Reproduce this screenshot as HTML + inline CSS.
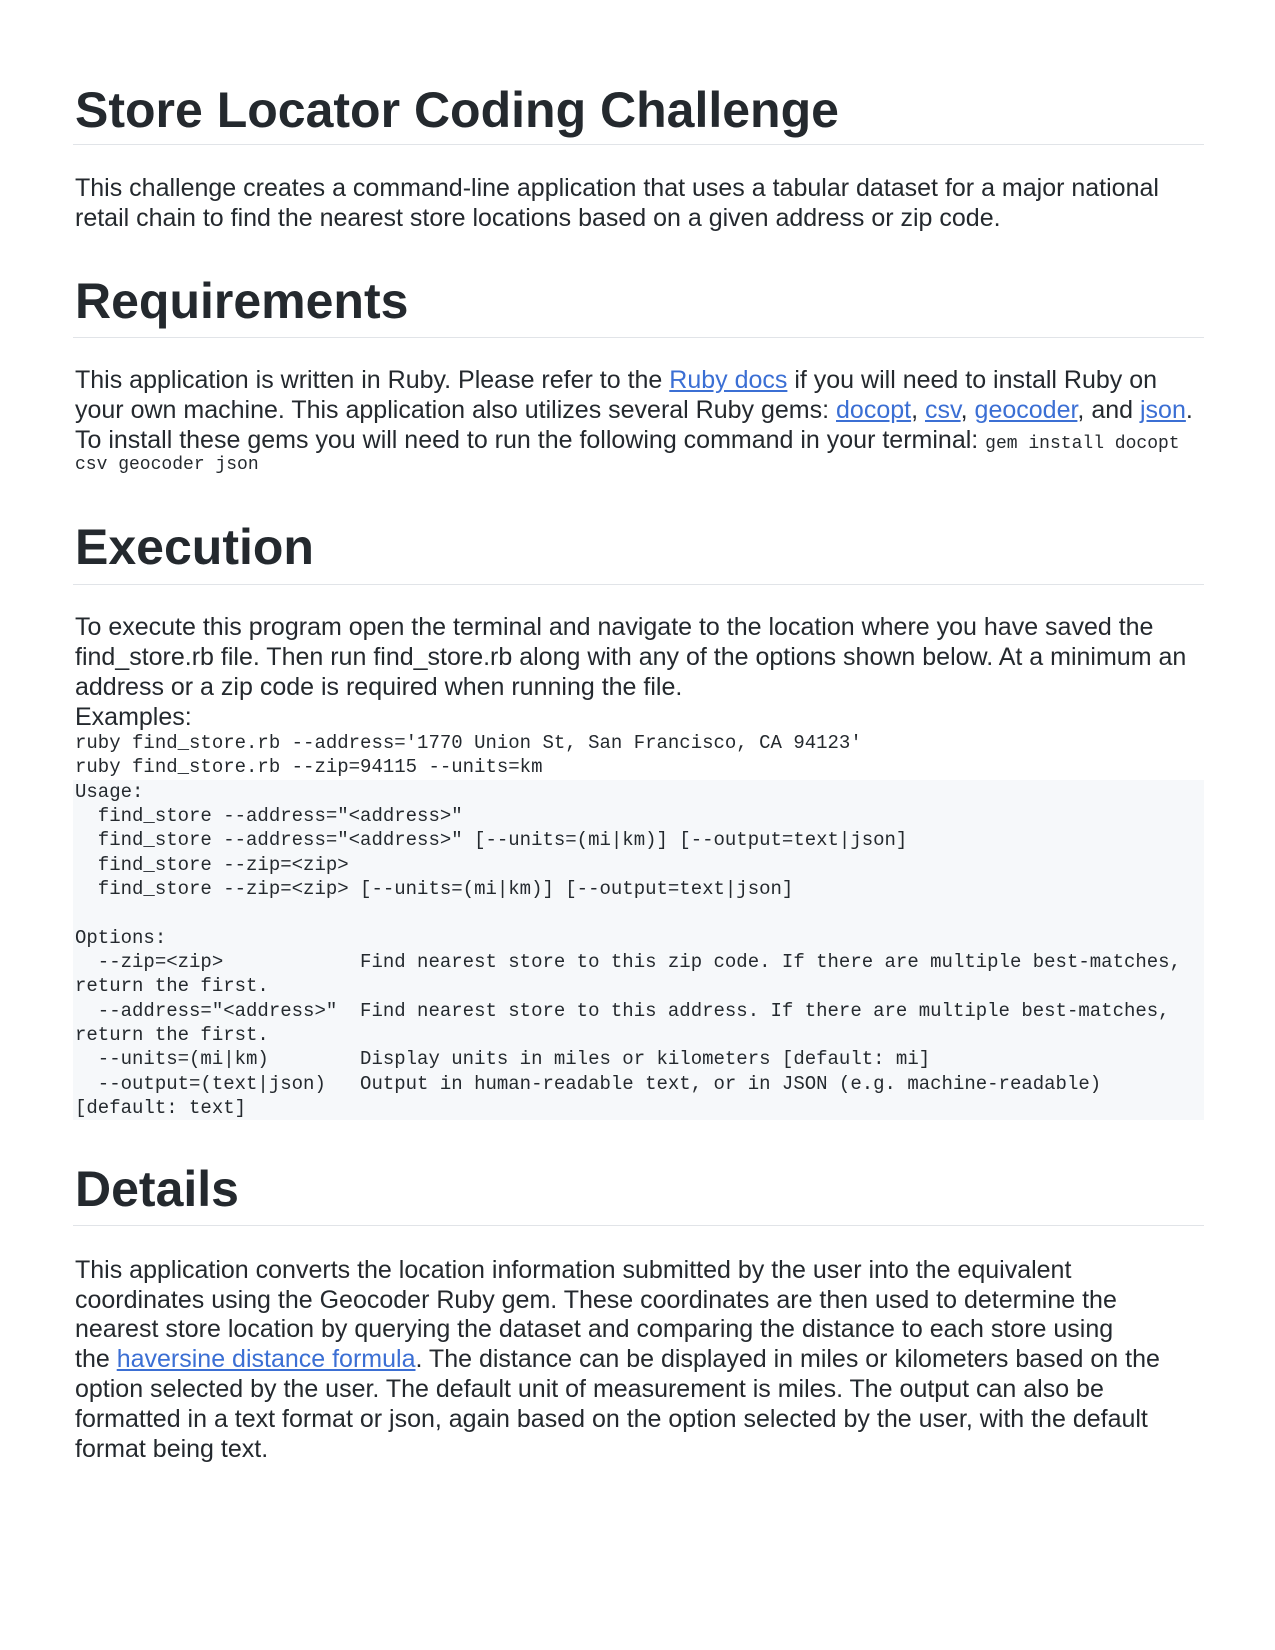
<!DOCTYPE html>
<html><head><meta charset="utf-8"><style>
body{margin:0;width:1275px;height:1650px;background:#fff;position:relative;color:#24292e;font-family:"Liberation Sans",Arial,sans-serif;overflow:hidden}
.l{position:absolute;left:75px;white-space:pre;font-size:25px;line-height:30px;height:30px}
.h{position:absolute;left:75px;white-space:pre;font-size:50px;font-weight:bold;line-height:60px}
.rule{position:absolute;left:73px;width:1131px;height:1px;background:#e1e4e8}
.m{position:absolute;left:75px;white-space:pre;font-family:"Liberation Mono",monospace;font-size:19px;line-height:24.35px}
code{font-family:"Liberation Mono",monospace;font-size:18px}
a{color:#3b6fd4;text-decoration:underline}
.bg{position:absolute;left:73px;width:1131px;top:780px;height:340px;background:#f6f8fa}
</style></head><body>
<div class="h" style="top:80px">Store Locator Coding Challenge</div>
<div class="rule" style="top:144px"></div>
<div class="l" style="top:173px">This challenge creates a command-line application that uses a tabular dataset for a major national</div>
<div class="l" style="top:203px">retail chain to find the nearest store locations based on a given address or zip code.</div>

<div class="h" style="top:271px">Requirements</div>
<div class="rule" style="top:337px"></div>
<div class="l" style="top:365px">This application is written in Ruby. Please refer to the <a>Ruby docs</a> if you will need to install Ruby on</div>
<div class="l" style="top:395px">your own machine. This application also utilizes several Ruby gems: <a>docopt</a>, <a>csv</a>, <a>geocoder</a>, and <a>json</a>.</div>
<div class="l" style="top:425px">To install these gems you will need to run the following command in your terminal: <code>gem install docopt</code></div>
<div class="m" style="top:453px;font-size:18px">csv geocoder json</div>

<div class="h" style="top:517px">Execution</div>
<div class="rule" style="top:584px"></div>
<div class="l" style="top:612px">To execute this program open the terminal and navigate to the location where you have saved the</div>
<div class="l" style="top:642px">find_store.rb file. Then run find_store.rb along with any of the options shown below. At a minimum an</div>
<div class="l" style="top:672px">address or a zip code is required when running the file.</div>
<div class="l" style="top:702px">Examples:</div>
<div class="bg"></div>
<div class="m" style="top:731px">ruby find_store.rb --address='1770 Union St, San Francisco, CA 94123'
ruby find_store.rb --zip=94115 --units=km
Usage:
  find_store --address="&lt;address&gt;"
  find_store --address="&lt;address&gt;" [--units=(mi|km)] [--output=text|json]
  find_store --zip=&lt;zip&gt;
  find_store --zip=&lt;zip&gt; [--units=(mi|km)] [--output=text|json]

Options:
  --zip=&lt;zip&gt;            Find nearest store to this zip code. If there are multiple best-matches,
return the first.
  --address="&lt;address&gt;"  Find nearest store to this address. If there are multiple best-matches,
return the first.
  --units=(mi|km)        Display units in miles or kilometers [default: mi]
  --output=(text|json)   Output in human-readable text, or in JSON (e.g. machine-readable)
[default: text]</div>

<div class="h" style="top:1159px">Details</div>
<div class="rule" style="top:1225px"></div>
<div class="l" style="top:1255px">This application converts the location information submitted by the user into the equivalent</div>
<div class="l" style="top:1285px">coordinates using the Geocoder Ruby gem. These coordinates are then used to determine the</div>
<div class="l" style="top:1314px">nearest store location by querying the dataset and comparing the distance to each store using</div>
<div class="l" style="top:1344px">the <a>haversine distance formula</a>. The distance can be displayed in miles or kilometers based on the</div>
<div class="l" style="top:1374px">option selected by the user. The default unit of measurement is miles. The output can also be</div>
<div class="l" style="top:1404px">formatted in a text format or json, again based on the option selected by the user, with the default</div>
<div class="l" style="top:1434px">format being text.</div>
</body></html>
